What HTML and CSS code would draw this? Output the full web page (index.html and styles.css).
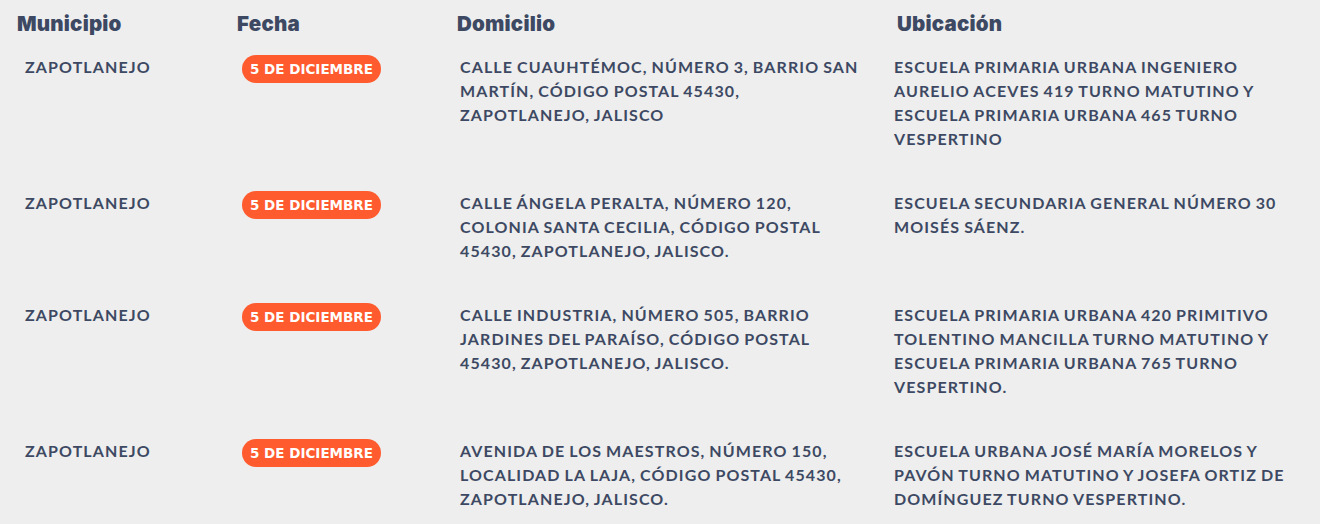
FILE: index.html
```html
<!DOCTYPE html>
<html lang="es">
<head>
<meta charset="utf-8">
<title>Casillas</title>
<link rel="stylesheet" href="styles.css">
</head>
<body>
<div class="table">
  <div class="row head">
    <div class="th">Municipio</div>
    <div class="th">Fecha</div>
    <div class="th">Domicilio</div>
    <div class="th">Ubicación</div>
  </div>
  <div class="row">
    <div class="td mun">ZAPOTLANEJO</div>
    <div class="td fecha"><span class="badge">5 DE DICIEMBRE</span></div>
    <div class="td dom">CALLE CUAUHTÉMOC, NÚMERO 3, BARRIO SAN MARTÍN, CÓDIGO POSTAL 45430, ZAPOTLANEJO, JALISCO</div>
    <div class="td ubi">ESCUELA PRIMARIA URBANA INGENIERO AURELIO ACEVES 419 TURNO MATUTINO Y ESCUELA PRIMARIA URBANA 465 TURNO VESPERTINO</div>
  </div>
  <div class="row">
    <div class="td mun">ZAPOTLANEJO</div>
    <div class="td fecha"><span class="badge">5 DE DICIEMBRE</span></div>
    <div class="td dom">CALLE ÁNGELA PERALTA, NÚMERO 120, COLONIA SANTA CECILIA, CÓDIGO POSTAL 45430, ZAPOTLANEJO, JALISCO.</div>
    <div class="td ubi">ESCUELA SECUNDARIA GENERAL NÚMERO 30 MOISÉS SÁENZ.</div>
  </div>
  <div class="row">
    <div class="td mun">ZAPOTLANEJO</div>
    <div class="td fecha"><span class="badge">5 DE DICIEMBRE</span></div>
    <div class="td dom">CALLE INDUSTRIA, NÚMERO 505, BARRIO JARDINES DEL PARAÍSO, CÓDIGO POSTAL 45430, ZAPOTLANEJO, JALISCO.</div>
    <div class="td ubi">ESCUELA PRIMARIA URBANA 420 PRIMITIVO TOLENTINO MANCILLA TURNO MATUTINO Y ESCUELA PRIMARIA URBANA 765 TURNO VESPERTINO.</div>
  </div>
  <div class="row">
    <div class="td mun">ZAPOTLANEJO</div>
    <div class="td fecha"><span class="badge">5 DE DICIEMBRE</span></div>
    <div class="td dom">AVENIDA DE LOS MAESTROS, NÚMERO 150, LOCALIDAD LA LAJA, CÓDIGO POSTAL 45430, ZAPOTLANEJO, JALISCO.</div>
    <div class="td ubi">ESCUELA URBANA JOSÉ MARÍA MORELOS Y PAVÓN TURNO MATUTINO Y JOSEFA ORTIZ DE DOMÍNGUEZ TURNO VESPERTINO.</div>
  </div>
</div>
</body>
</html>
```
FILE: styles.css
```css
html, body {
  margin: 0;
  padding: 0;
  background: #eeeeee;
}
body {
  color: #3d4963;
  font-family: "Lato", "Liberation Sans", sans-serif;
  overflow: hidden;
}
.table {
  display: flex;
  flex-direction: column;
}
.row {
  display: grid;
  grid-template-columns: 220px 220px 440px 1fr;
  padding: 20px 0 20px 17px;
}
.row.head {
  padding-top: 12px;
  padding-bottom: 0;
}
.th {
  font-family: "Inter", "DejaVu Sans", sans-serif;
  font-weight: 900;
  font-size: 20.5px;
  line-height: 23px;
  letter-spacing: 0.2px;
}
.td {
  font-weight: 700;
  font-size: 16px;
  line-height: 24px;
  letter-spacing: 1.1px;
  word-spacing: -1px;
}
.mun { padding-left: 8px; }
.fecha { padding-left: 5px; }
.dom { padding-left: 3px; max-width: 405px; }
.ubi { margin-left: -3px; padding-right: 16px; max-width: 405px; }
.badge {
  display: inline-flex;
  align-items: center;
  height: 28px;
  padding: 0 8px;
  border-radius: 14px;
  background: #ff5b2e;
  color: #ffffff;
  font-family: "DejaVu Sans", sans-serif;
  font-weight: 700;
  font-size: 13.5px;
  letter-spacing: 0;
  word-spacing: 0;
  box-sizing: border-box;
}
```
